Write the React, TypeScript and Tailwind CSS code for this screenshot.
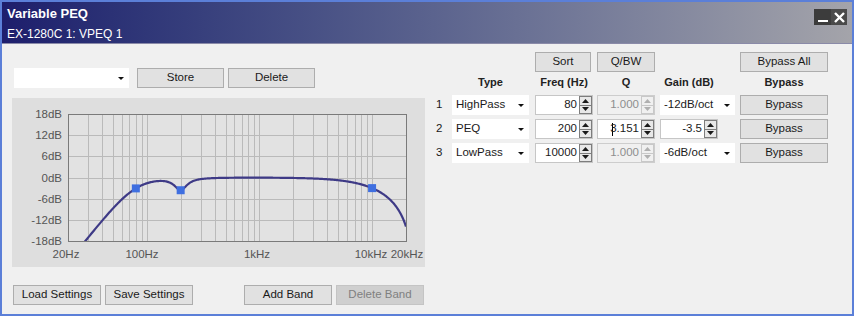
import React from "react";

const FS = 48000;
const wp = (f: number) => Math.tan((Math.PI * f) / FS);

// combined response of the three bands (HP 80Hz 12dB/oct, PEQ 200Hz, LP 10kHz 6dB/oct)
function responseDb(f: number) {
  const rh = wp(f) / wp(80);
  const hp = rh ** 4 / (1 + rh ** 4);
  const rl = wp(f) / wp(10000);
  const lp = 1 / (1 + rl * rl);
  const r = wp(f) / wp(200);
  const A = 10 ** (-3.5 / 40);
  const Q = 3.151;
  const a = (1 - r * r) ** 2;
  const peq = (a + ((r * A) / Q) ** 2) / (a + (r / (A * Q)) ** 2);
  return 10 * Math.log10(hp * lp * peq);
}

const L = 56;
const T = 16;
const R = 394;
const B = 143;
const xOf = (f: number) => L + ((R - L) * Math.log10(f / 20)) / 3;
const yOf = (db: number) => T + ((18 - db) * (B - T)) / 36;

const gridFreqs = [
  30, 40, 50, 60, 70, 80, 90, 100, 200, 300, 400, 500, 600, 700, 800, 900, 1000, 2000, 3000, 4000, 5000, 6000,
  7000, 8000, 9000, 10000,
];

const font = "'Liberation Sans', Arial, sans-serif";

function Graph() {
  const pts: string[] = [];
  for (let i = 0; i <= 400; i++) {
    const f = 20 * 10 ** ((3 * i) / 400);
    pts.push(`${i === 0 ? "M" : "L"}${xOf(f).toFixed(2)} ${yOf(responseDb(f)).toFixed(2)}`);
  }
  const markers = [80, 200, 10000];
  const xLabels: [string, number][] = [
    ["20Hz", 54],
    ["100Hz", 130],
    ["1kHz", 245],
    ["10kHz", 359],
    ["20kHz", 395],
  ];
  return (
    <svg width="413" height="169" className="block">
      <defs>
        <clipPath id="plot">
          <rect x={L} y={T} width={R - L} height={B - T} />
        </clipPath>
      </defs>
      <rect x={L} y={T} width={R - L} height={B - T} fill="#e2e2e2" />
      {gridFreqs.map((f) => (
        <line key={f} x1={Math.round(xOf(f)) + 0.5} x2={Math.round(xOf(f)) + 0.5} y1={T} y2={B} stroke="#bababa" />
      ))}
      {[12, 6, 0, -6, -12].map((d) => (
        <line key={d} x1={L} x2={R} y1={Math.round(yOf(d)) + 0.5} y2={Math.round(yOf(d)) + 0.5} stroke="#bababa" />
      ))}
      <rect x={L + 0.5} y={T + 0.5} width={R - L} height={B - T} fill="none" stroke="#7a7a7a" />
      {[18, 12, 6, 0, -6, -12, -18].map((d) => (
        <text key={d} x={50} y={yOf(d) + 4} textAnchor="end" fontSize="11.5" fill="#555" fontFamily={font}>
          {d}dB
        </text>
      ))}
      {xLabels.map(([t, x]) => (
        <text key={t} x={x} y={160} textAnchor="middle" fontSize="11.5" fill="#555" fontFamily={font}>
          {t}
        </text>
      ))}
      <path d={pts.join(" ")} fill="none" stroke="#3e3a86" strokeWidth="2.2" clipPath="url(#plot)" />
      {markers.map((f) => (
        <rect key={f} x={xOf(f) - 4} y={yOf(responseDb(f)) - 4} width="8" height="8" fill="#3f6fe0" />
      ))}
    </svg>
  );
}

function Arrow() {
  return (
    <svg width="6" height="3" className="block">
      <path d="M0 0H6L3 3Z" fill="#111" />
    </svg>
  );
}

function Btn({ children, className = "", disabled }: { children: React.ReactNode; className?: string; disabled?: boolean }) {
  return (
    <div
      className={`h-[20px] flex items-center justify-center border text-[11.5px] ${
        disabled ? "bg-[#cfcfcf] border-[#c4c4c4] text-[#808080]" : "bg-[#e1e1e1] border-[#adadad] text-[#1a1a1a]"
      } ${className}`}
    >
      {children}
    </div>
  );
}

function Select({ value, className = "" }: { value: string; className?: string }) {
  return (
    <div className={`h-[20px] flex items-center bg-white text-[11.5px] text-[#1a1a1a] ${className}`}>
      <span className="flex-1 pl-[4px]">{value}</span>
      <span className="w-[16px] h-full flex items-center justify-center">
        <Arrow />
      </span>
    </div>
  );
}

function Spin({ disabled }: { disabled?: boolean }) {
  const c = disabled ? "#b0b0b0" : "#1a1a1a";
  return (
    <div
      className={`w-[13px] h-[18px] flex flex-col border ${
        disabled ? "border-[#c8c8c8] bg-[#f0f0f0]" : "border-[#7d7d7d] bg-[#e8e8e8]"
      }`}
    >
      <div className={`flex-1 flex items-center justify-center border-b ${disabled ? "border-[#c8c8c8]" : "border-[#7d7d7d]"}`}>
        <svg width="7" height="4" className="block">
          <path d="M3.5 0L7 4H0Z" fill={c} />
        </svg>
      </div>
      <div className="flex-1 flex items-center justify-center">
        <svg width="7" height="4" className="block">
          <path d="M0 0H7L3.5 4Z" fill={c} />
        </svg>
      </div>
    </div>
  );
}

function SpinBox({ value, disabled, caret }: { value: string; disabled?: boolean; caret?: boolean }) {
  return (
    <div
      className={`w-[58px] h-[20px] flex items-center border text-[11.5px] ${
        disabled ? "bg-[#f0f0f0] border-[#cdcdcd] text-[#8e8e8e]" : "bg-white border-[#c6c6c6] text-[#1a1a1a]"
      }`}
    >
      <span className="flex-1 text-right pr-[2px] flex items-center justify-end">
        {caret && <span className="inline-block w-px h-[13px] bg-black -mr-[3px]" />}
        {value}
      </span>
      <Spin disabled={disabled} />
    </div>
  );
}

const rows = [
  { n: 1, type: "HighPass", freq: "80", q: "1.000", qOn: false, gain: "-12dB/oct", gainSel: true },
  { n: 2, type: "PEQ", freq: "200", q: "3.151", qOn: true, gain: "-3.5", gainSel: false },
  { n: 3, type: "LowPass", freq: "10000", q: "1.000", qOn: false, gain: "-6dB/oct", gainSel: true },
];

export default function App() {
  return (
    <div
      className="w-[854px] h-[316px] border-2 border-[#5b7fd8] bg-[#f0f0f0] flex flex-col overflow-hidden"
      style={{ fontFamily: font }}
    >
      <div className="h-[42px] flex justify-between bg-gradient-to-r from-[#1e1e6c] to-[#a4a4aa] border-b border-[#8a8aa8]">
        <div className="pl-[5px] pt-[4px] text-white">
          <div className="text-[13px] font-bold leading-[16px]">Variable PEQ</div>
          <div className="text-[12px] leading-[16px] mt-[4px]">EX-1280C 1: VPEQ 1</div>
        </div>
        <div className="flex mt-[7px] mr-[5px] h-[16px]">
          <div className="w-[17px] bg-[#3c3c3c] flex items-end justify-center pb-[3px]">
            <div className="w-[10px] h-[2px] bg-white" />
          </div>
          <div className="w-[16px] bg-[#4a4a4a] flex items-center justify-center">
            <svg width="11" height="11" className="block">
              <path d="M1 1L10 10M10 1L1 10" stroke="#fff" strokeWidth="2.4" />
            </svg>
          </div>
        </div>
      </div>

      <div className="flex flex-1">
        <div className="w-[413px] ml-[10px] pt-[24px] flex flex-col">
          <div className="flex">
            <Select value="" className="w-[115px] ml-[2px]" />
            <Btn className="w-[87px] ml-[8px]">Store</Btn>
            <Btn className="w-[87px] ml-[4px]">Delete</Btn>
          </div>
          <div className="mt-[10px] h-[169px] bg-[#dedede]">
            <Graph />
          </div>
          <div className="flex mt-[18px]">
            <Btn className="w-[88px] ml-[1px]">Load Settings</Btn>
            <Btn className="w-[88px] ml-[4px]">Save Settings</Btn>
            <Btn className="w-[88px] ml-[51px]">Add Band</Btn>
            <Btn className="w-[88px] ml-[4px]" disabled>
              Delete Band
            </Btn>
          </div>
        </div>

        <div className="ml-[9px] pt-[8px] flex flex-col">
          <div className="flex">
            <Btn className="w-[56px] ml-[101px]">Sort</Btn>
            <Btn className="w-[58px] ml-[6px]">Q/BW</Btn>
            <Btn className="w-[88px] ml-[85px]">Bypass All</Btn>
          </div>
          <div className="flex h-[20px] items-center text-[11px] font-bold text-[#222]">
            <div className="w-[77px] ml-[18px] text-center">Type</div>
            <div className="w-[58px] ml-[6px] text-center">Freq (Hz)</div>
            <div className="w-[58px] ml-[4px] text-center">Q</div>
            <div className="w-[58px] ml-[5px] text-center">Gain (dB)</div>
            <div className="w-[88px] ml-[22px] text-center">Bypass</div>
          </div>
          <div className="flex flex-col gap-[4px] mt-[3px]">
            {rows.map((r) => (
              <div key={r.n} className="flex items-center h-[20px] text-[11.5px]">
                <div className="w-[18px] pl-[2px] text-[#1a1a1a]">{r.n}</div>
                <Select value={r.type} className="w-[77px]" />
                <div className="ml-[6px]">
                  <SpinBox value={r.freq} />
                </div>
                <div className="ml-[4px]">
                  <SpinBox value={r.q} disabled={!r.qOn} caret={r.qOn} />
                </div>
                <div className="ml-[5px] w-[75px]">
                  {r.gainSel ? <Select value={r.gain} className="w-[75px]" /> : <SpinBox value={r.gain} />}
                </div>
                <Btn className="w-[88px] ml-[5px]">Bypass</Btn>
              </div>
            ))}
          </div>
        </div>
      </div>
    </div>
  );
}
